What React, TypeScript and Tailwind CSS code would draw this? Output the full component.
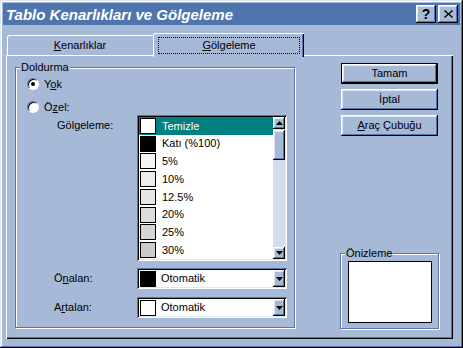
const raised =
  "shadow-[inset_-1px_-1px_0_#000,inset_1px_1px_0_#fff,inset_-2px_-2px_0_#5676a8,inset_2px_2px_0_#dfe7f3]";
const sunken =
  "shadow-[inset_1px_1px_0_#5676a8,inset_-1px_-1px_0_#fff,inset_2px_2px_0_#000,inset_-2px_-2px_0_#dfe7f3]";

const items = [
  { label: "Temizle", color: "bg-white" },
  { label: "Katı (%100)", color: "bg-black" },
  { label: "5%", color: "bg-[#f5f5f5]" },
  { label: "10%", color: "bg-[#ededed]" },
  { label: "12.5%", color: "bg-[#e6e6e6]" },
  { label: "20%", color: "bg-[#dcdcdc]" },
  { label: "25%", color: "bg-[#d6d6d6]" },
  { label: "30%", color: "bg-[#cbcbcb]" },
];

function Arrow({ up }: { up?: boolean }) {
  return (
    <svg width="7" height="4" viewBox="0 0 7 4">
      <path d={up ? "M3.5 0 L7 4 L0 4 Z" : "M0 0 L7 0 L3.5 4 Z"} fill="#000" />
    </svg>
  );
}

function Swatch({ color }: { color: string }) {
  return <div className={`w-[16px] h-[16px] border border-black shrink-0 ${color}`} />;
}

function Radio({ checked, children }: { checked?: boolean; children: React.ReactNode }) {
  return (
    <div className="flex items-center h-[12px] gap-[5px]">
      <div className="w-[12px] h-[12px] rounded-full bg-white border border-t-[#5676a8] border-l-[#5676a8] border-r-[#fff] border-b-[#fff] flex items-center justify-center shadow-[inset_1px_1px_0_#000]">
        {checked && <div className="w-[4px] h-[4px] rounded-full bg-black" />}
      </div>
      <span className="leading-[13px]">{children}</span>
    </div>
  );
}

function Group({ title, className, children }: { title: string; className: string; children: React.ReactNode }) {
  return (
    <div className={`relative border border-[#5676a8] shadow-[1px_1px_0_#fff,inset_1px_1px_0_#fff] ${className}`}>
      <span className="absolute left-[4px] -top-[7px] bg-[#a6b9d7] px-[1px] leading-[13px]">{title}</span>
      {children}
    </div>
  );
}

function Button({ children, def }: { children: React.ReactNode; def?: boolean }) {
  return (
    <div className={`w-[97px] h-[21px] ${def ? "border border-black" : ""}`}>
      <div className={`w-full h-full flex items-center justify-center ${raised}`}>{children}</div>
    </div>
  );
}

function Combo({ color, label }: { color: string; label: string }) {
  return (
    <div className={`w-[150px] h-[21px] bg-white p-[2px] flex items-center ${sunken}`}>
      <div className="flex-1 flex items-center pl-[1px] gap-[5px]">
        <Swatch color={color} />
        <span>{label}</span>
      </div>
      <div className={`w-[12px] h-[17px] bg-[#a6b9d7] flex items-center justify-center ${raised}`}>
        <Arrow />
      </div>
    </div>
  );
}

function ListBox() {
  return (
    <div className={`w-[150px] h-[146px] bg-white p-[2px] flex ${sunken}`}>
      <div className="flex-1 flex flex-col">
        {items.map((it, i) => (
          <div
            key={it.label}
            className={`h-[18px] flex items-center pl-[1px] gap-[6px] ${i === 0 ? "bg-[#008080] text-white" : ""}`}
          >
            <Swatch color={it.color} />
            <span>{it.label}</span>
          </div>
        ))}
      </div>
      <div className="w-[12px] bg-[#d3ddee] flex flex-col">
        <div className={`h-[12px] bg-[#a6b9d7] flex items-center justify-center ${raised}`}>
          <Arrow up />
        </div>
        <div className={`h-[30px] mt-[1px] bg-[#a6b9d7] ${raised}`} />
        <div className="flex-1" />
        <div className={`h-[12px] bg-[#a6b9d7] flex items-center justify-center ${raised}`}>
          <Arrow />
        </div>
      </div>
    </div>
  );
}

export default function App() {
  return (
    <div className="w-[463px] h-[348px] bg-[#a6b9d7] p-[3px] flex flex-col overflow-hidden text-[11px] text-black font-['Liberation_Sans',Arial,sans-serif] shadow-[inset_-1px_-1px_0_#000,inset_1px_1px_0_#dfe7f3,inset_-2px_-2px_0_#5676a8,inset_2px_2px_0_#fff]">
      {/* title bar */}
      <div className="h-[22px] bg-[#4e75ad] flex items-center pl-[3px] pr-[2px]">
        <span className="flex-1 text-white italic font-bold text-[15px] leading-none">
          Tablo Kenarlıkları ve Gölgeleme
        </span>
        <div className={`w-[20px] h-[18px] bg-[#a6b9d7] flex items-center justify-center font-bold text-[14px] ${raised}`}>
          ?
        </div>
        <div className={`w-[20px] h-[18px] ml-[2px] bg-[#a6b9d7] flex items-center justify-center ${raised}`}>
          <svg width="9" height="8" viewBox="0 0 9 8">
            <path d="M1 0 L4.5 3.2 L8 0 L9 1 L5.5 4 L9 7 L8 8 L4.5 4.8 L1 8 L0 7 L3.5 4 L0 1 Z" fill="#000" />
          </svg>
        </div>
      </div>

      {/* tabs */}
      <div className="flex items-end h-[22px] mt-[8px] pl-[4px]">
        <div className="w-[146px] h-[20px] rounded-tl-[2px] flex items-center justify-center shadow-[inset_1px_1px_0_#fff]">
          <span>
            <span className="underline">K</span>enarlıklar
          </span>
        </div>
        <div className="relative z-10 w-[151px] h-[24px] -mb-[2px] bg-[#a6b9d7] rounded-tl-[2px] pt-[4px] pl-[5px] pr-[4px] shadow-[inset_1px_1px_0_#fff,inset_-1px_0_0_#000,inset_-2px_0_0_#5676a8]">
          <div className="h-[17px] border border-dotted border-black flex items-center justify-center">
            <span>
              <span className="underline">G</span>ölgeleme
            </span>
          </div>
        </div>
      </div>

      {/* panel */}
      <div className="ml-[3px] w-[447px] h-[284px] pt-[8px] pl-[9px] flex items-start shadow-[inset_1px_1px_0_#fff,inset_-1px_-1px_0_#000,inset_-2px_-2px_0_#5676a8]">
        <Group title="Doldurma" className="w-[280px] h-[261px] mt-[4px] pt-[10px] pl-[11px]">
          <Radio checked>
            Y<span className="underline">o</span>k
          </Radio>
          <div className="mt-[11px]">
            <Radio>
              Ö<span className="underline">z</span>el:
            </Radio>
          </div>
          <div className="flex mt-[2px] pl-[30px]">
            <span className="w-[80px] mt-[4px] leading-[13px]">
              Göl<span className="underline">g</span>eleme:
            </span>
            <ListBox />
          </div>
          <div className="flex items-center mt-[7px] pl-[27px]">
            <span className="w-[83px]">
              Ö<span className="underline">n</span>alan:
            </span>
            <Combo color="bg-black" label="Otomatik" />
          </div>
          <div className="flex items-center mt-[8px] pl-[27px]">
            <span className="w-[83px]">
              A<span className="underline">r</span>talan:
            </span>
            <Combo color="bg-white" label="Otomatik" />
          </div>
        </Group>

        <div className="ml-[45px] w-[100px] h-[266px] flex flex-col">
          <div className="ml-[1px] flex flex-col gap-[5px]">
            <Button def>Tamam</Button>
            <Button>İptal</Button>
            <Button>
              <span>
                <span className="underline">A</span>raç Çubuğu
              </span>
            </Button>
          </div>
          <Group title="Önizleme" className="mt-auto w-[99px] h-[76px] pt-[7px] pl-[7px]">
            <div className="w-[84px] h-[62px] bg-white border border-black" />
          </Group>
        </div>
      </div>
    </div>
  );
}
